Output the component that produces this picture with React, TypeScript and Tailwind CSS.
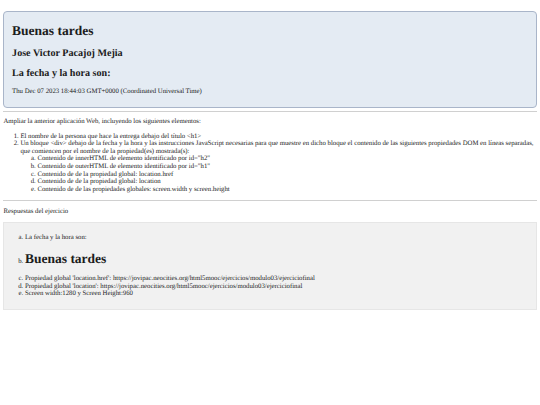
import React from 'react';

const subItems = [
  'Contenido de innerHTML de elemento identificado por id="h2"',
  'Contenido de outerHTML de elemento identificado por id="h1"',
  'Contenido de de la propiedad global: location.href',
  'Contenido de de la propiedad global: location',
  'Contenido de de las propiedades globales: screen.width y screen.height',
];

export default function App() {
  return (
    <div className="min-h-[405px] bg-white px-[3.4px] pt-[11px] font-['Liberation_Serif',serif] text-[6.75px] leading-[7.6px] text-[#1c1c1c] [text-rendering:geometricPrecision]">
      {/* Saludo y fecha */}
      <div className="h-[97px] rounded-[4px] border border-[#a9b5c9] bg-[#e4ebf3] px-[7.7px] pt-[11px]">
        <h1 className="text-[13.5px] leading-[16px] font-bold">Buenas tardes</h1>
        <h2 className="mt-[8.5px] text-[10.1px] leading-[12px] font-bold">Jose Victor Pacajoj Mejia</h2>
        <h2 className="mt-[8px] text-[10.1px] leading-[12px] font-bold">La fecha y la hora son:</h2>
        <p className="mt-[8px]">Thu Dec 07 2023 18:44:03 GMT+0000 (Coordinated Universal Time)</p>
      </div>

      <hr className="mt-[3px] border-t border-[#d0d0d0]" />

      <p className="mt-[6px]">Ampliar la anterior aplicación Web, incluyendo los siguientes elementos:</p>

      <ol className="mt-[7px] list-decimal pl-[17px]">
        <li>El nombre de la persona que hace la entrega debajo del título &lt;h1&gt;</li>
        <li>
          Un bloque &lt;div&gt; debajo de la fecha y la hora y las instrucciones JavaScript necesarias para que muestre en dicho bloque el contenido de las siguientes propiedades DOM en líneas separadas, que comiencen por el nombre de la propiedad(es) mostrada(s):
          <ol className="list-[lower-alpha] pl-[17px]">
            {subItems.map((item) => (
              <li key={item}>{item}</li>
            ))}
          </ol>
        </li>
      </ol>

      <hr className="mt-[6.7px] border-t border-[#d0d0d0]" />

      <p className="mt-[7px]">Respuestas del ejercicio</p>

      {/* Respuestas */}
      <div className="mt-[6.5px] h-[88px] border border-[#e6e6e6] bg-[#f1f1f1] pt-[11px] pl-[13.6px]">
        <ol className="list-[lower-alpha] pl-[7px]">
          <li>La fecha y la hora son:</li>
          <li className="mt-[9px]">
            <h1 className="text-[13.5px] leading-[16px] font-bold">Buenas tardes</h1>
          </li>
          <li className="mt-[8.5px]">Propiedad global 'location.href': https://jovipac.neocities.org/html5mooc/ejercicios/modulo03/ejerciciofinal</li>
          <li>Propiedad global 'location': https://jovipac.neocities.org/html5mooc/ejercicios/modulo03/ejerciciofinal</li>
          <li>Screen width:1280 y Screen Height:960</li>
        </ol>
      </div>
    </div>
  );
}
